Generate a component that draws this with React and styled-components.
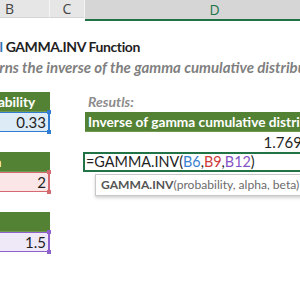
import React from "react";
import styled, { createGlobalStyle } from "styled-components";

const GlobalStyle = createGlobalStyle`
  html, body { margin: 0; padding: 0; background: #ffffff; }
  body { width: 300px; height: 289px; overflow: hidden; font-family: Lato, "Open Sans", sans-serif; }
`;

const Sheet = styled.div`
  width: 300px;
  height: 289px;
  overflow: hidden;
  background: #fff;
  position: relative;
`;

const HeaderRow = styled.div`
  display: grid;
  grid-template-columns: 50px 35px 260px;
  height: 19px;
`;

const ColHead = styled.div`
  display: flex;
  align-items: center;
  justify-content: ${(p) => (p.$left ? "flex-start" : "center")};
  padding-left: ${(p) => (p.$left ? "5px" : "0")};
  font-family: "Open Sans", sans-serif;
  font-size: 14px;
  color: ${(p) => (p.$active ? "#217346" : "#444")};
  background: ${(p) => (p.$active ? "#d6d6d6" : "#e6e6e6")};
  border-right: 1px solid ${(p) => (p.$active ? "transparent" : "#f4f4f4")};
  border-bottom: ${(p) => (p.$active ? "2px solid #217346" : "1px solid #d4d4d4")};
  box-sizing: border-box;
  ${(p) => (p.$active ? "" : "height: 18px;")}
`;

const Spacer = styled.div`
  height: ${(p) => p.$h}px;
`;

const TextRow = styled.div`
  height: 20px;
  display: flex;
  align-items: flex-end;
  white-space: nowrap;
  overflow: visible;
`;

const Title = styled.div`
  margin-left: ${(p) => p.$offset}px;
  font-size: 14px;
  letter-spacing: -0.4px;
  font-weight: 700;
  color: #1f1f1f;
  line-height: 20px;
`;

const Blue = styled.span`
  color: #2e75b6;
`;

const Subtitle = styled.div`
  margin-left: ${(p) => p.$offset}px;
  font-size: 15px;
  font-weight: 700;
  font-style: italic;
  color: #7f7f7f;
  line-height: 20px;
`;

const Row = styled.div`
  display: grid;
  grid-template-columns: 50px 35px 260px;
  height: 20px;
  position: relative;
`;

const GreenHead = styled.div`
  background: #548235;
  color: #fff;
  font-weight: 700;
  font-size: 13.7px;
  line-height: 20px;
  white-space: nowrap;
  overflow: hidden;
  padding-left: 3px;
  grid-column: ${(p) => p.$col};
  margin-left: ${(p) => p.$shift || 0}px;
  box-sizing: border-box;
  border-bottom: 1px solid #6f9a50;
`;

const palette = {
  blue: { border: "#2f7cd2", fill: "#ddebf7" },
  red: { border: "#d46a6f", fill: "#fbe6e7" },
  purple: { border: "#8e62cc", fill: "#efe9f7" },
};

const ValueCell = styled.div`
  grid-column: 1;
  position: relative;
  background: ${(p) => palette[p.$tone].fill};
  border: 1px solid ${(p) => palette[p.$tone].border};
  border-left: none;
  border-right-width: 2px;
  box-sizing: border-box;
  font-size: 15px;
  line-height: 18px;
  text-align: right;
  padding-right: 2px;
  color: #1f1f1f;
`;

const Handle = styled.span`
  position: absolute;
  right: -3px;
  ${(p) => (p.$bottom ? "bottom: -3px;" : "top: -3px;")}
  width: 4px;
  height: 4px;
  background: ${(p) => palette[p.$tone].border};
`;

const Label = styled.div`
  grid-column: 3;
  padding-left: 3px;
  font-size: 14px;
  font-weight: 700;
  font-style: italic;
  color: #8c8c8c;
  line-height: 20px;
`;

const Number = styled.div`
  grid-column: 3;
  text-align: right;
  padding-right: 17px;
  font-size: 15px;
  line-height: 20px;
  color: #1f1f1f;
  white-space: nowrap;
`;

const FormulaCell = styled.div`
  grid-column: 3;
  margin-left: -2px;
  border: 2px solid #217346;
  box-sizing: border-box;
  font-size: 14.4px;
  line-height: 16px;
  padding-left: 1px;
  white-space: nowrap;
  color: #1f1f1f;
  background: #fff;
`;

const Ref = styled.span`
  color: ${(p) => p.$c};
`;

const Tooltip = styled.div`
  position: absolute;
  left: 95px;
  top: 2px;
  height: 22px;
  width: 240px;
  box-sizing: border-box;
  background: #fff;
  border: 1px solid #c8c8c8;
  box-shadow: 0 2px 3px rgba(0, 0, 0, 0.18);
  padding-left: 5px;
  font-family: Lato, sans-serif;
  font-size: 12.1px;
  line-height: 20px;
  color: #6b6b6b;
  white-space: nowrap;
  z-index: 2;
`;

const Fn = styled.b`
  color: #555;
  font-weight: 700;
`;

export default function App() {
  return (
    <Sheet>
      <GlobalStyle />
      <HeaderRow>
        <ColHead $left>B</ColHead>
        <ColHead>C</ColHead>
        <ColHead $active>D</ColHead>
      </HeaderRow>
      <Spacer $h={18} />
      <TextRow>
        <Title $offset={-28}>
          <Blue>Excel</Blue> GAMMA.INV Function
        </Title>
      </TextRow>
      <TextRow>
        <Subtitle $offset={-30}>
          Returns the inverse of the gamma cumulative distribution.
        </Subtitle>
      </TextRow>
      <Spacer $h={15} />
      <Row>
        <GreenHead $col={1} $shift={-34}>
          Probability
        </GreenHead>
        <Label>Resutls:</Label>
      </Row>
      <Row>
        <ValueCell $tone="blue">
          0.33
          <Handle $tone="blue" />
          <Handle $tone="blue" $bottom />
        </ValueCell>
        <GreenHead $col={3}>Inverse of gamma cumulative distribution</GreenHead>
      </Row>
      <Row>
        <Number>1.769475</Number>
      </Row>
      <Row>
        <GreenHead $col={1} $shift={-37}>
          Alpha
        </GreenHead>
        <FormulaCell>
          =GAMMA.INV(<Ref $c="#3a80d0">B6</Ref>,<Ref $c="#cf3b3b">B9</Ref>,
          <Ref $c="#8554c6">B12</Ref>)
        </FormulaCell>
      </Row>
      <Row>
        <ValueCell $tone="red">
          2
          <Handle $tone="red" />
          <Handle $tone="red" $bottom />
        </ValueCell>
        <Tooltip>
          <Fn>GAMMA.INV</Fn>(probability, alpha, beta)
        </Tooltip>
      </Row>
      <Spacer $h={20} />
      <Row>
        <GreenHead $col={1} $shift={-80}>
          Beta
        </GreenHead>
      </Row>
      <Row>
        <ValueCell $tone="purple">
          1.5
          <Handle $tone="purple" />
          <Handle $tone="purple" $bottom />
        </ValueCell>
      </Row>
    </Sheet>
  );
}
